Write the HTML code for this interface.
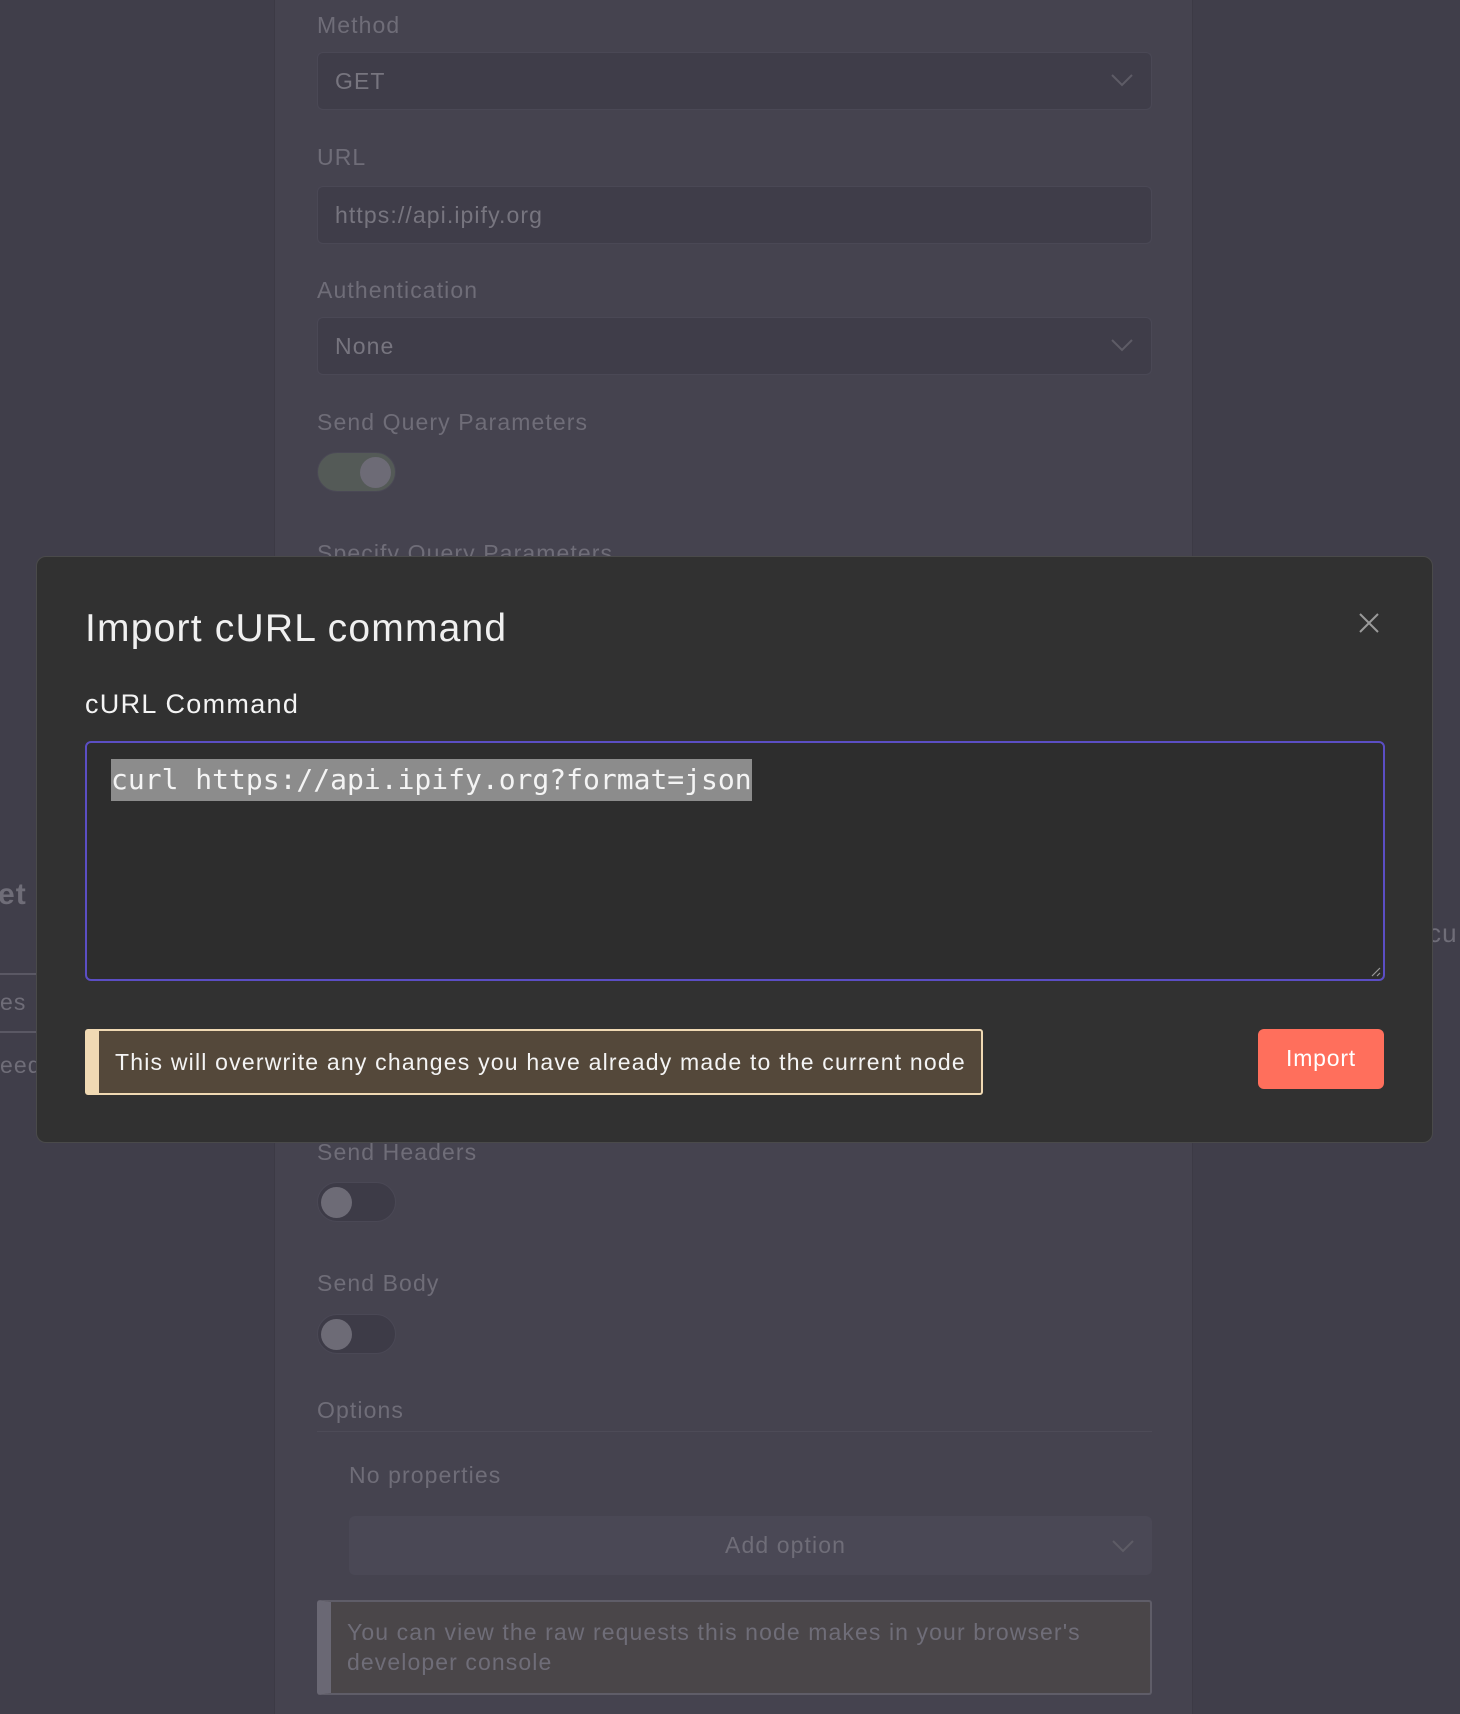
<!DOCTYPE html>
<html><head><meta charset="utf-8">
<style>
*{box-sizing:border-box;margin:0;padding:0}
html,body{width:1460px;height:1714px;overflow:hidden}
body{background:#403e4a;font-family:"Liberation Sans",sans-serif;position:relative;letter-spacing:1.1px}
.abs{position:absolute}
.panel{left:274px;top:0;width:919px;height:1714px;background:#45434f;border-left:1px solid #3c3a45;border-right:1px solid #3c3a45}
.lbl{color:#6f6d78;font-size:23px;left:317px}
.inp{left:317px;width:835px;height:58px;background:#3f3d49;border:1px solid #4a4855;border-radius:6px;color:#77757f;font-size:23px;padding:0 17px;line-height:56px}
.chev{position:absolute;right:18px;top:20px;width:22px;height:14px}
.tog{left:317px;width:79px;height:40px;border-radius:20px;background:#3d3b47;border:1px solid #4a4855}
.tog .k{position:absolute;top:4px;width:31px;height:31px;border-radius:50%;background:#6d6b76}
.modal{left:36px;top:556px;width:1397px;height:587px;background:#313131;border:1px solid #4a4a4a;border-radius:10px}
</style></head><body>
<div class="abs panel"></div>
<div class="abs" style="left:-2px;top:878px;color:#6f6d78;font-size:30px;font-weight:bold">et</div>
<div class="abs" style="left:0;top:973px;width:36px;height:2px;background:#5a5864"></div>
<div class="abs" style="left:0;top:989px;color:#6f6d78;font-size:23px">es</div>
<div class="abs" style="left:0;top:1031px;width:36px;height:2px;background:#5a5864"></div>
<div class="abs" style="left:0;top:1052px;color:#6f6d78;font-size:23px">eed</div>
<div class="abs" style="left:1428px;top:918px;color:#6f6d78;font-size:26px">cu</div>

<div class="abs lbl" style="top:12px">Method</div>
<div class="abs inp" style="top:52px">GET<svg class="chev" viewBox="0 0 22 14"><path d="M1 2l10 10 10-10" fill="none" stroke="#5e5c66" stroke-width="2"/></svg></div>
<div class="abs lbl" style="top:144px">URL</div>
<div class="abs inp" style="top:186px">https://api.ipify.org</div>
<div class="abs lbl" style="top:277px">Authentication</div>
<div class="abs inp" style="top:317px">None<svg class="chev" viewBox="0 0 22 14"><path d="M1 2l10 10 10-10" fill="none" stroke="#5e5c66" stroke-width="2"/></svg></div>
<div class="abs lbl" style="top:409px">Send Query Parameters</div>
<div class="abs tog" style="top:452px;background:#545a57"><div class="k" style="left:42px"></div></div>
<div class="abs lbl" style="top:540px">Specify Query Parameters</div>

<div class="abs lbl" style="top:1139px">Send Headers</div>
<div class="abs tog" style="top:1182px"><div class="k" style="left:3px"></div></div>
<div class="abs lbl" style="top:1270px">Send Body</div>
<div class="abs tog" style="top:1314px"><div class="k" style="left:3px"></div></div>
<div class="abs lbl" style="top:1397px">Options</div>
<div class="abs" style="left:317px;top:1431px;width:835px;height:1px;background:#4d4b57"></div>
<div class="abs lbl" style="left:349px;top:1462px">No properties</div>
<div class="abs" style="left:349px;top:1516px;width:803px;height:59px;background:#4a4855;border-radius:6px;color:#6f6d78;font-size:23px;line-height:59px;text-align:center;padding-left:70px">Add option<svg class="chev" viewBox="0 0 22 14" style="top:23px"><path d="M1 2l10 10 10-10" fill="none" stroke="#5e5c66" stroke-width="2"/></svg></div>
<div class="abs" style="left:317px;top:1600px;width:835px;height:95px;background:#4a4649;border:2px solid #5f5d68;border-left:14px solid #6a6874;border-radius:3px;color:#6f6d78;font-size:23px;line-height:30px;padding:15px 40px 0 16px">You can view the raw requests this node makes in your browser's developer console</div>

<div class="abs modal">
  <div class="abs" style="left:48px;top:50px;color:#f0f0f0;font-size:39px;letter-spacing:1.2px">Import cURL command</div>
  <svg class="abs" style="left:1321px;top:55px" width="22" height="22" viewBox="0 0 22 22"><path d="M2 2l18 18M20 2L2 20" stroke="#9a9a9a" stroke-width="2"/></svg>
  <div class="abs" style="left:48px;top:132px;color:#f4f4f4;font-size:27px;letter-spacing:1.3px">cURL Command</div>
  <div class="abs" style="left:48px;top:184px;width:1300px;height:240px;background:#2d2d2d;border:2px solid #5b4ec4;border-radius:6px">
    <div class="abs" style="left:24px;top:16px;height:42px;background:#8c8c8c;color:#f4f4f4;font-family:'DejaVu Sans Mono','Liberation Mono',monospace;font-size:28px;line-height:42px;white-space:pre;letter-spacing:0">curl https://api.ipify.org?format=json</div>
    <svg class="abs" style="right:2px;bottom:2px" width="12" height="12" viewBox="0 0 12 12"><path d="M11 3L3 11M11 8L8 11" stroke="#999" stroke-width="1.2"/></svg>
  </div>
  <div class="abs" style="left:48px;top:472px;width:898px;height:66px;background:#54483a;border:2px solid #f0d9b3;border-left:14px solid #f0d9b3;border-radius:3px;color:#f4f4f4;font-size:23px;line-height:62px;padding-left:16px;white-space:nowrap;letter-spacing:1.2px">This will overwrite any changes you have already made to the current node</div>
  <div class="abs" style="left:1221px;top:472px;width:126px;height:60px;background:#ff6f5c;border-radius:6px;color:#fff;font-size:23px;line-height:58px;text-align:center;letter-spacing:0.8px">Import</div>
</div>
</body></html>
